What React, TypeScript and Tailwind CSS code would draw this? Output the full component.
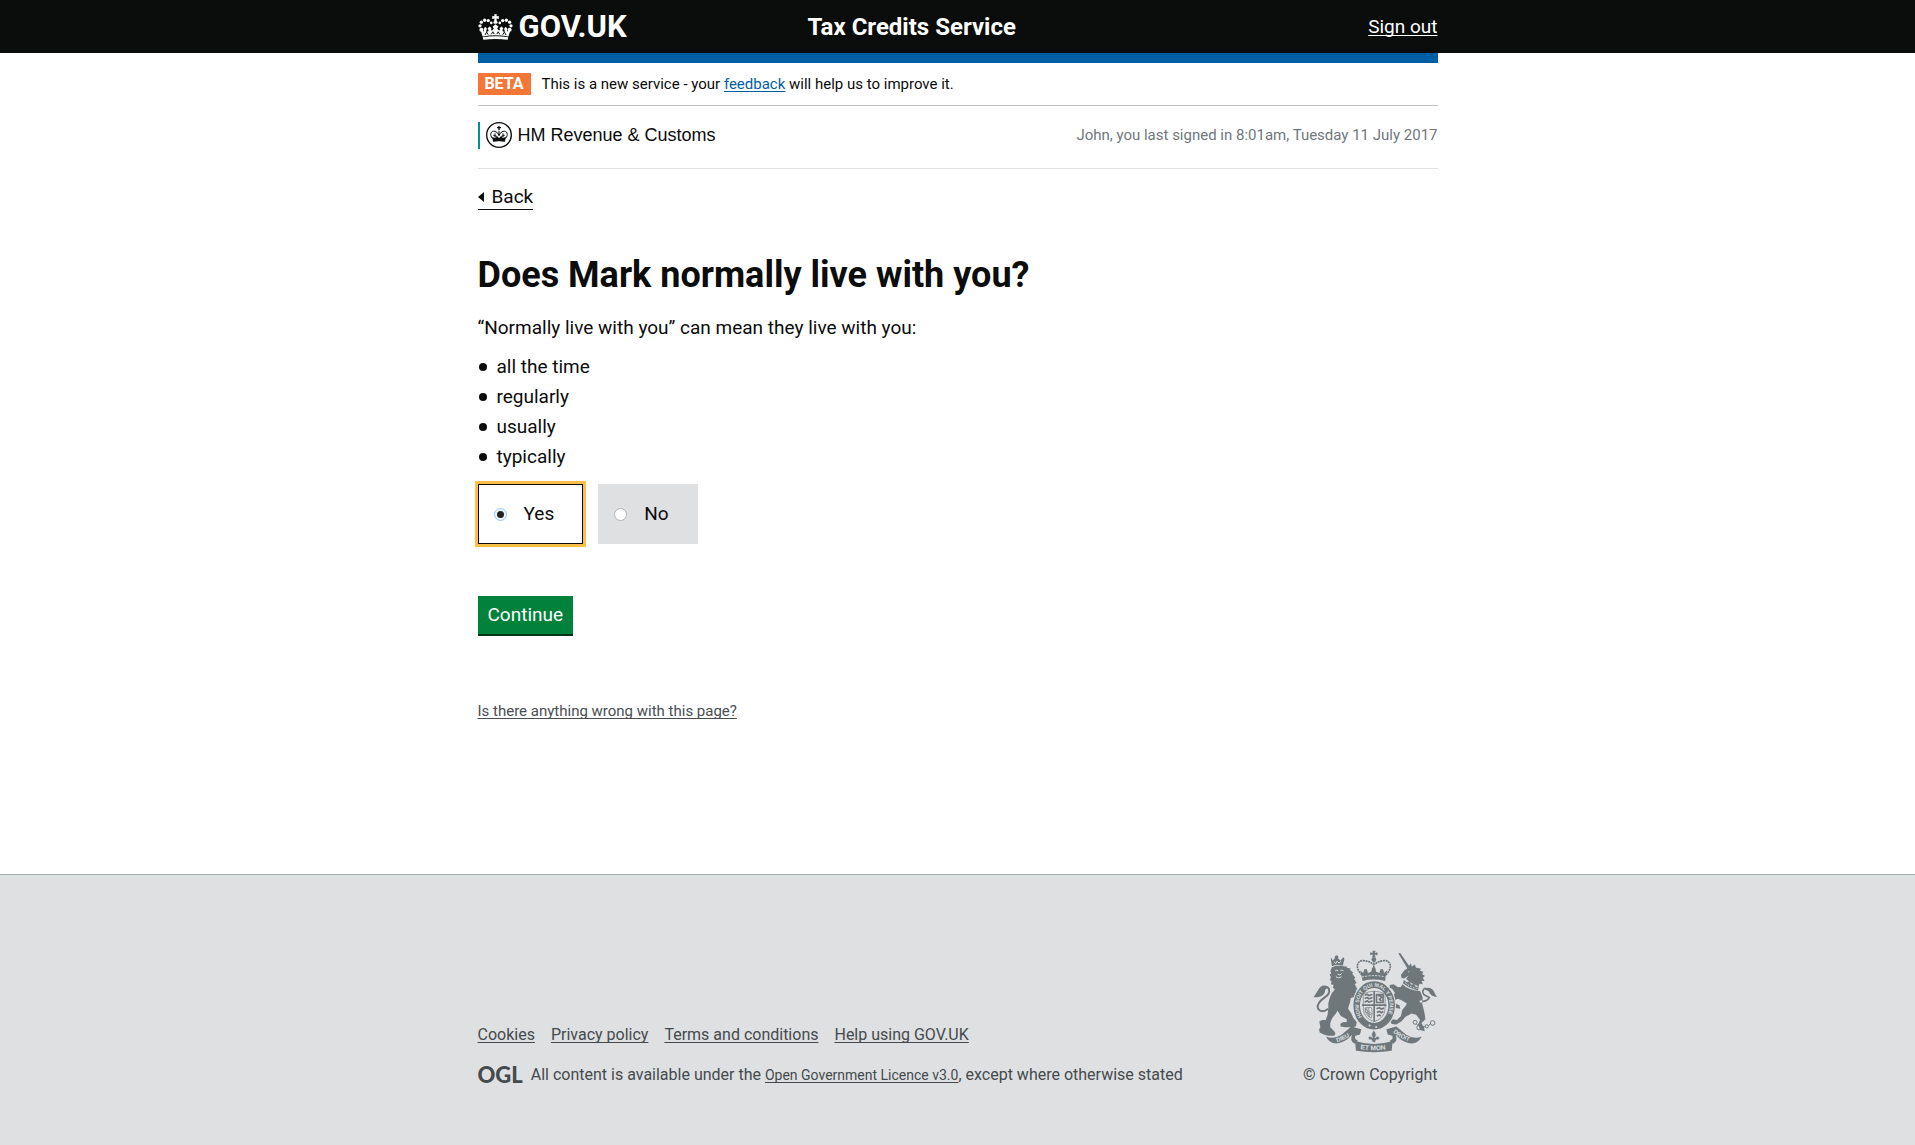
import { useState } from "react";
import type { ReactNode } from "react";

function TextLink({ children, className = "" }: { children: ReactNode; className?: string }) {
  return (
    <a
      href="#"
      className={`underline decoration-1 underline-offset-2 [text-decoration-skip-ink:none] ${className}`}
    >
      {children}
    </a>
  );
}

function CrownIcon() {
  const dots = [
    [22, 71, 6], [18, 59, 5], [22, 48, 5], [32, 42, 5], [43, 43, 5], [52, 50, 4],
    [108, 71, 6], [112, 59, 5], [108, 48, 5], [98, 42, 5], [87, 43, 5], [78, 50, 4],
  ];
  return (
    <svg viewBox="12 23 106 79" className="h-[26px] w-[35px]" fill="currentColor" aria-hidden="true">
      {dots.map(([cx, cy, r]) => (
        <circle key={`${cx}-${cy}`} cx={cx} cy={cy} r={r} />
      ))}
      <path d="M61 24h8l-1 6 7-1v9l-7-1 1 8c4 2 4 8-4 8s-8-6-4-8l1-8-7 1v-9l7 1z" />
      <path d="M26 91 L18 68 q6 7 12 8 l-1-8 5-6 5 6 -3 9 q8 1 8-5 l-3-6 6-5 6 5 -2 7 q7 0 9-6 l-4-5 9-8 9 8 -4 5 q2 6 9 6 l-2-7 6-5 6 5 -3 6 q0 6 8 5 l-3-9 5-6 5 6 -1 8 q6-1 12-8 L104 91 q-39-7-78 0z" />
      <path d="M26 94q39-7 78 0l-2 7q-37-4-74 0z" />
      <path d="M33 87 L38 78 43 86M52 85 L57 77 61 84M69 84 L73 77 78 85M87 86 L92 78 97 87" fill="none" stroke="#0b0c0c" strokeWidth="3" />
    </svg>
  );
}

function HmrcCrest() {
  return (
    <svg viewBox="0 0 78 78" className="size-[26px]" fill="none" stroke="#0b0c0c" aria-hidden="true">
      <circle cx="39" cy="39" r="37" strokeWidth="4" />
      <path d="M39 12v12M33 17h12" strokeWidth="4" />
      <path d="M20 50C9 38 15 25 27 28q9 3 12 12 3-9 12-12c12-3 18 10 7 22" strokeWidth="3" />
      <path d="M39 26v16M27 34v12M51 34v12M22 40l10 3M46 43l10-3" strokeWidth="3" />
      <path d="M19 45l8 4 6-6 6 6 6-6 6 6 8-4-3 14q-17-4-34 0z" fill="#0b0c0c" strokeWidth="1" />
    </svg>
  );
}

function RoyalArms() {
  return (
    <svg viewBox="38 28 378 312" className="h-[103px] w-[125px]" fill="#6f777b" aria-hidden="true">
      {/* central crown */}
      <path d="M218 30h9l-2 7 8-2v9l-8-2 2 9h-10l2-9-8 2v-9l8 2z" />
      <circle cx="222" cy="57" r="7" />
      <g fill="none" stroke="#6f777b" strokeWidth="5" strokeDasharray="6 2">
        <path d="M186 103C164 84 170 60 190 60q20 2 30 12" />
        <path d="M258 103C280 84 274 60 254 60q-20 2-30 12" />
        <path d="M222 60v28" />
      </g>
      <path d="M181 90l9 8 3-12h8l3 12 10-4 3-13h9l3 13 10 4 3-12h8l3 12 9-8-6 32q-36-9-68 0z" />
      <path d="M186 110q36-9 72 0" fill="none" stroke="#dee0e2" strokeWidth="3" strokeDasharray="6 4" />

      {/* lion */}
      <path d="M91 50L98 60 104 52 104 46 110 44 114 47 114 54 121 60 129 50 133 54 128 76Q110 70 95 77z" />
      <path d="M101 64L107 69 111 62 117 68 122 62" fill="none" stroke="#dee0e2" strokeWidth="3" />
      <path d="M95 80Q112 73 130 77L142 79 139 82 152 84 149 88 160 97 156 99 166 112 162 115 170 128 164 131 172 147 166 150 178 157 188 160 192 168 188 174 172 176 160 170 152 174 150 186 146 198 144 206 154 220 160 234 170 246 168 258 160 262 134 262 122 260 120 252 128 247 140 246 140 238 122 228 112 212 106 222 96 234 90 248 90 262 102 274 106 282 102 288 84 288 70 284 58 278 56 268 60 262 58 252 57 244 66 240 76 240 82 224 84 206 84 190 88 174 94 160 104 148 98 142 100 134 92 132 94 122 89 120 92 110 88 104 93 98 90 92z" />
      <path d="M105 91q5-3 9 0M121 90q5-2 9 1M112 101l7 3 6-5M107 109q9 7 17 0" fill="none" stroke="#dee0e2" strokeWidth="3" />
      <path d="M84 206C62 222 44 208 56 188C66 170 92 168 86 146C82 138 70 140 68 148" fill="none" stroke="#6f777b" strokeWidth="6" />
      <path d="M76 136C56 132 52 156 39 171C56 172 72 168 74 152C76 144 80 142 86 144C85 139 81 137 76 136z" />

      {/* unicorn */}
      <path d="M296 38L302 37 334 84 326 88z" />
      <path d="M323 84L334 68 337 78 346 72 350 82 364 84 362 91 372 94 368 101 377 107 370 112 376 121 367 122 370 132 361 130 357 138Q330 127 320 116L326 106 314 114 306 113 304 104 314 90z" />
      <circle cx="328" cy="94" r="2" fill="#dee0e2" />
      <path d="M313 119L322 126 330 123 335 133 344 131 349 140 358 138 356 151Q334 147 310 129z" />
      <path d="M317 127q21 18 39 17" fill="none" stroke="#dee0e2" strokeWidth="3" strokeDasharray="5 4" />
      <path d="M308 132Q330 152 362 152L370 172 368 190 372 204 376 222 378 238 366 250 374 262 376 274 362 270 356 254 362 240 350 224 336 220 318 230 306 244 290 254 276 252 272 244 280 238 292 240 304 228 308 210 318 198 322 190 306 180 294 176 286 180 284 188 300 196 302 206 288 204 278 196 274 180 278 168 286 158 278 146 270 142 270 134 282 132 294 140 304 140z" />
      <path d="M368 184C378 184 388 178 390 172C382 166 364 164 372 148C376 142 384 144 386 150" fill="none" stroke="#6f777b" strokeWidth="5" />
      <path d="M376 150C384 136 402 144 406 158L413 170C402 170 392 164 390 156C386 150 380 148 376 150z" />
      <g fill="none" stroke="#6f777b" strokeWidth="3">
        <circle cx="347" cy="247" r="6" />
        <circle cx="359" cy="263" r="7" />
        <circle cx="382" cy="259" r="5" />
        <circle cx="400" cy="249" r="7" />
        <path d="M365 261l12-1M387 258l6-6M352 252l3 5" />
      </g>
      <circle cx="365" cy="184" r="5" fill="#dee0e2" stroke="#6f777b" strokeWidth="2" />

      {/* garter and shield */}
      <ellipse cx="223" cy="196" rx="66" ry="76" fill="#dee0e2" />
      <ellipse cx="223" cy="196" rx="53" ry="63" fill="none" stroke="#6f777b" strokeWidth="20" />
      <defs>
        <path id="garter-arc" d="M186 231A47 57 0 1 1 260 231" />
        <path id="scroll-left" d="M110 307Q138 299 160 280" />
        <path id="scroll-right" d="M280 277Q306 300 342 308" />
        <path id="scroll-middle" d="M181 328Q222 336 268 327" />
      </defs>
      <g fill="#dee0e2" className="font-['Liberation_Sans'] font-bold">
        <text fontSize="16"><textPath href="#garter-arc">HONI SOIT QUI MAL Y PENSE</textPath></text>
      </g>
      <path d="M190 161q33-16 66 0v44q0 29-33 40-33-11-33-40z" fill="#dee0e2" stroke="#6f777b" strokeWidth="2" />
      <path d="M223 153v92M186 195h74" fill="none" stroke="#6f777b" strokeWidth="5" />
      <g fill="none" stroke="#6f777b" strokeWidth="5">
        <path d="M194 165l8-3 5 4 11-3M194 175l8-3 5 4 11-4M194 186l8-4 5 4 11-4" />
        <path d="M230 163h20v24h-20zM236 169l5-4 5 6-7 6 6 6" />
        <path d="M230 206l9-3 6 4 8-3M231 217l8-3 6 4 6-4M231 228l8-3 4 3" />
      </g>
      <path d="M196 203c-2 18 9 27 18 31 4-10 4-24 0-32zM200 204l6 26M206 204l3 28M194 214l20 11M194 206l22 15" fill="none" stroke="#6f777b" strokeWidth="2" />
      <circle cx="209" cy="257" r="3" fill="#dee0e2" />
      <circle cx="229" cy="261" r="3" fill="#dee0e2" />

      {/* motto scroll */}
      <path d="M77 290Q100 300 124 285L154 260 184 268 180 284 166 288Q162 298 174 303L163 312Q148 302 156 285Q128 316 98 310Q84 304 77 290z" />
      <path d="M367 290Q344 300 320 285L290 260 260 268 264 284 278 288Q282 298 270 303L281 312Q296 302 288 285Q316 316 346 310Q360 304 367 290z" />
      <path d="M165 304Q222 322 279 304L276 333Q222 342 168 333z" />
      <g fill="#dee0e2" className="font-['Liberation_Sans'] font-bold">
        <text fontSize="18"><textPath href="#scroll-left">DIEU</textPath></text>
        <text fontSize="18"><textPath href="#scroll-right">DROIT</textPath></text>
        <text fontSize="20"><textPath href="#scroll-middle">ET MON</textPath></text>
      </g>
      <path d="M222 271q12 13 3 23 11-10 14 0 0 9-10 6l-3 8h-8l-3-8q-10 3-10-6 3-10 14 0-9-10 3-23z" stroke="#dee0e2" strokeWidth="2" />
    </svg>
  );
}

const meanings = ["all the time", "regularly", "usually", "typically"];
const answers = ["Yes", "No"];
const footerLinks = ["Cookies", "Privacy policy", "Terms and conditions", "Help using GOV.UK"];

export default function App() {
  const [answer, setAnswer] = useState("Yes");

  return (
    <div className="flex min-h-screen flex-col bg-white font-['Roboto',sans-serif] text-[19px] leading-[30px] text-[#0b0c0c]">
      <header className="bg-[#0b0c0c] text-white">
        <div className="mx-auto grid h-[53px] max-w-[960px] grid-cols-[330px_1fr_auto] items-center">
          <a href="#" className="flex items-center gap-1.5 text-[31px] font-bold">
            <CrownIcon />
            GOV.UK
          </a>
          <a href="#" className="text-2xl font-bold">Tax Credits Service</a>
          <TextLink>Sign out</TextLink>
        </div>
      </header>

      <main className="mx-auto w-full max-w-[960px] pb-[148px]">
        <div className="h-[10px] bg-[#005ea5]" />

        <div className="flex h-[43px] items-center gap-[11px] border-b border-[#bfc1c3] text-[15px]">
          <strong className="w-[53px] bg-[#f47738] text-center text-base leading-[22px] text-white">BETA</strong>
          <p>
            This is a new service - your <TextLink className="text-[#005ea5]">feedback</TextLink> will help us to
            improve it.
          </p>
        </div>

        <div className="flex items-center justify-between border-b border-[#dee0e2] pt-3.5 pb-[18px]">
          <div className="flex h-[27px] items-center gap-1.5 border-l-2 border-[#009390] pl-1.5 font-['Liberation_Sans',sans-serif] text-[18px]">
            <HmrcCrest />
            HM Revenue &amp; Customs
          </div>
          <p className="text-[15px] text-[#6f777b]">John, you last signed in 8:01am, Tuesday 11 July 2017</p>
        </div>

        <a href="#" className="mt-4 inline-flex items-center gap-2 border-b border-[#0b0c0c] leading-6">
          <svg viewBox="0 0 6 10" className="h-2.5 w-1.5" aria-hidden="true">
            <path d="M6 0v10L0 5z" fill="#0b0c0c" />
          </svg>
          Back
        </a>

        <h1 id="question" className="mt-10 text-[36px] leading-[48px] font-bold">
          Does Mark normally live with you?
        </h1>

        <p className="mt-3.5">“Normally live with you” can mean they live with you:</p>
        <ul className="mt-[9px]">
          {meanings.map((item) => (
            <li key={item} className="flex items-center gap-2.5 pl-px before:size-2 before:rounded-full before:bg-[#0b0c0c]">
              {item}
            </li>
          ))}
        </ul>

        <form onSubmit={(event) => event.preventDefault()}>
          <fieldset aria-labelledby="question" className="mt-3 flex gap-[15px]">
            {answers.map((item) => (
              <label
                key={item}
                className="flex h-[60px] items-center gap-[17px] border border-[#dee0e2] bg-[#dee0e2] pr-7 pl-[15px] has-checked:border-[#0b0c0c] has-checked:bg-white has-checked:outline-3 has-checked:outline-[#ffbf47]"
              >
                <input
                  type="radio"
                  name="lives-with-you"
                  value={item}
                  checked={answer === item}
                  onChange={() => setAnswer(item)}
                  className="grid size-[13px] appearance-none place-items-center rounded-full border border-[#b4b4b4] bg-white before:size-[7px] before:rounded-full checked:border-[#9cc8f5] checked:bg-[#eaf4fe] checked:before:bg-[#222]"
                />
                {item}
              </label>
            ))}
          </fieldset>
          <button
            type="submit"
            className="mt-[52px] h-10 border-b-2 border-[#003618] bg-[#00823b] px-2.5 text-white"
          >
            Continue
          </button>
        </form>

        <p className="mt-[60px] text-[15px] leading-[30px]">
          <TextLink className="text-[#494e52]">Is there anything wrong with this page?</TextLink>
        </p>
      </main>

      <footer className="flex-1 border-t border-[#a1acb2] bg-[#dee0e2] pt-[75px] pb-[58px] text-base text-[#454a4d]">
        <div className="mx-auto flex max-w-[960px] items-end justify-between">
          <div>
            <ul className="flex gap-4">
              {footerLinks.map((item) => (
                <li key={item}>
                  <TextLink>{item}</TextLink>
                </li>
              ))}
            </ul>
            <div className="mt-4 flex items-center gap-2">
              <span className="font-['Lato',sans-serif] text-[22px] leading-none font-black">OGL</span>
              <p>
                All content is available under the <TextLink className="text-sm">Open Government Licence v3.0</TextLink>,
                except where otherwise stated
              </p>
            </div>
          </div>
          <div className="flex flex-col items-end gap-2.5">
            <RoyalArms />
            <p>© Crown Copyright</p>
          </div>
        </div>
      </footer>
    </div>
  );
}
